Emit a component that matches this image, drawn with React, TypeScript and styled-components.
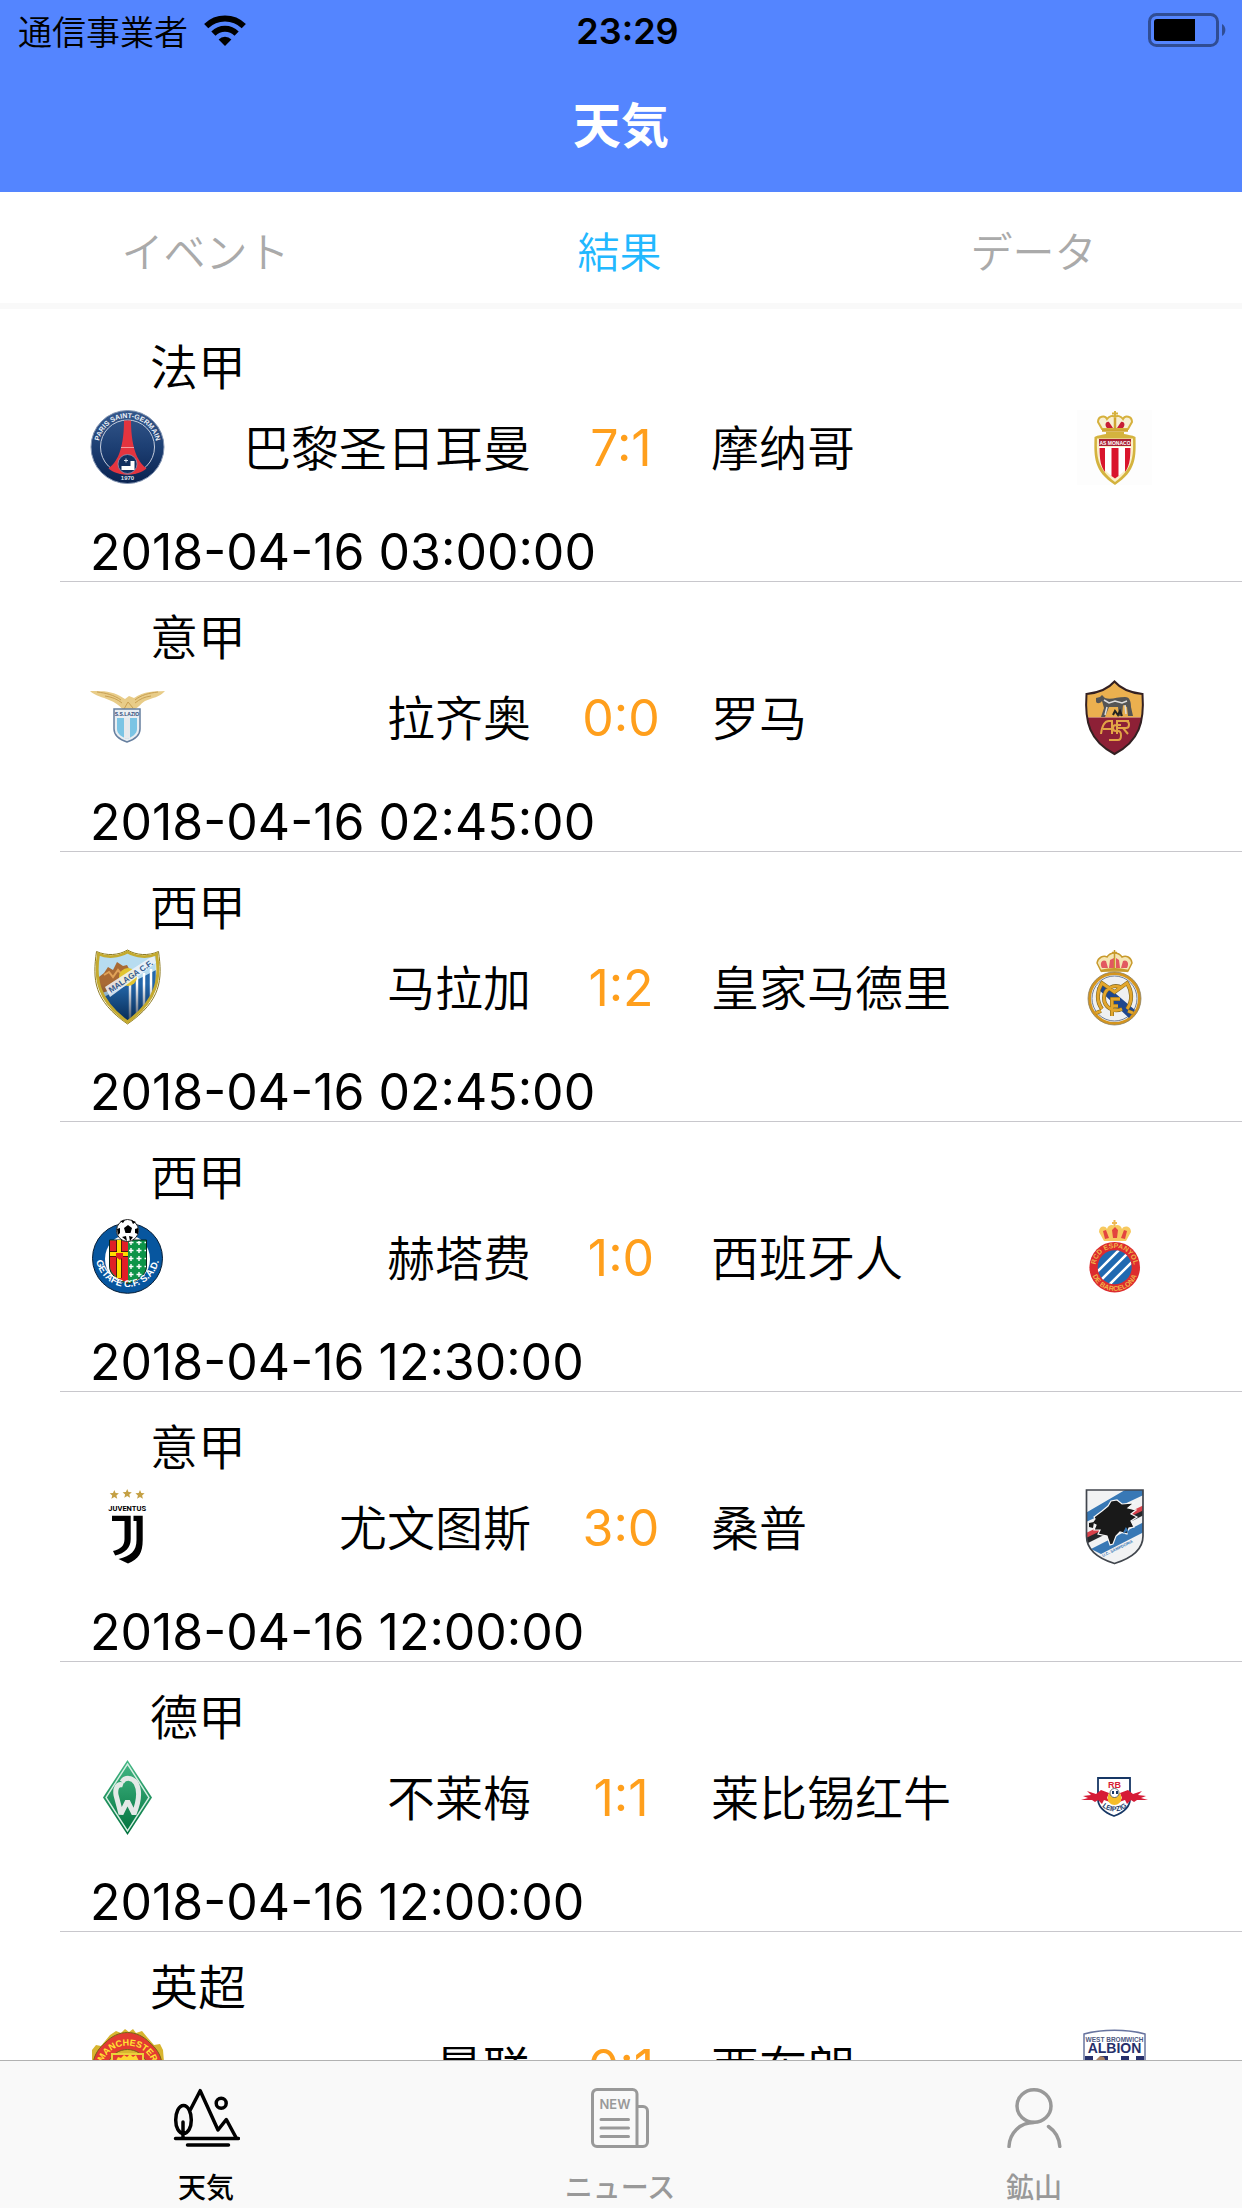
import React from "react";
import styled, { createGlobalStyle } from "styled-components";

const latin = `Inter, "Noto Sans CJK JP"`;

const GlobalStyle = createGlobalStyle`
  *, *::before, *::after { box-sizing: border-box; }
  body {
    margin: 0;
    background: #fff;
    color: #000;
    font-family: ${latin}, sans-serif;
  }
  button { border: 0; padding: 0; background: none; font: inherit; cursor: pointer; }
`;

const Screen = styled.div`
  display: flex;
  flex-direction: column;
  height: 100vh;
`;

const Header = styled.header`
  flex: none;
  background: #5485ff;
`;

const StatusBar = styled.div`
  display: grid;
  grid-template-columns: 1fr auto 1fr;
  align-items: center;
  height: 60px;
  padding: 0 15px 0 18px;
`;

const Carrier = styled.div`
  display: flex;
  align-items: center;
  gap: 16px;
  font-size: 34px;
  font-weight: 350;
`;

const Clock = styled.time`
  padding: 2px 0 0 10px;
  font-size: 36px;
  font-weight: 600;
`;

const BatterySlot = styled.div`
  display: flex;
  justify-content: flex-end;
`;

const Title = styled.h1`
  margin: 0;
  font-size: 48px;
  font-weight: 700;
  line-height: 132px;
  text-align: center;
  color: #fff;
`;

const Segments = styled.nav`
  flex: none;
  display: grid;
  grid-template-columns: repeat(3, 1fr);
  border-bottom: 6px solid #f9f9f9;
`;

const Segment = styled.button<{ $active?: boolean }>`
  && { padding: 4px 3px 0 0; }
  height: 111px;
  font-size: 42px;
  font-weight: 350;
  color: ${(p) => (p.$active ? "#22b8ff" : "#aaa")};
`;

const MatchList = styled.ul`
  flex: 1;
  min-height: 0;
  margin: 0;
  padding: 3px 0 0;
  overflow-y: auto;
  scrollbar-width: none;
  list-style: none;
`;

const MatchRow = styled.li`
  height: 270px;
  margin-left: 60px;
  padding: 22px 90px 0 30px;
  border-bottom: 1px solid #c8c7cc;
`;

const League = styled.div`
  padding-left: 60px;
  font-family: "Noto Sans CJK SC", sans-serif;
  font-size: 48px;
  font-weight: 350;
  line-height: 60px;
`;

const Fixture = styled.div`
  display: grid;
  grid-template-columns: 75px 1fr 180px 1fr 75px;
  align-items: center;
  margin: 16px 0 37px;
`;

const Team = styled.span<{ $side: "left" | "right" }>`
  padding-bottom: 5px;
  font-family: "Noto Sans CJK SC", sans-serif;
  font-size: 48px;
  font-weight: 350;
  line-height: 60px;
  white-space: nowrap;
  text-align: ${(p) => p.$side};
`;

const Score = styled.strong`
  font-size: 50px;
  font-weight: 400;
  line-height: 60px;
  text-align: center;
  color: #ff9f1c;
`;

const Kickoff = styled.time`
  display: block;
  font-size: 50px;
  line-height: 60px;
`;

const CrestSvg = styled.svg`
  display: block;
  width: 75px;
  height: 75px;
  overflow: visible;
  font-family: "Liberation Sans", sans-serif;
  font-weight: 700;
`;

const TabBar = styled.nav`
  flex: none;
  display: grid;
  grid-template-columns: repeat(3, 1fr);
  border-top: 1px solid #b2b2b2;
  background: #f9f9f9;
`;

const Tab = styled.button<{ $active?: boolean }>`
  && { padding: 27px 2px 2px 0; }
  display: flex;
  flex-direction: column;
  align-items: center;
  gap: 22px;
  font-size: 28px;
  font-weight: 500;
  line-height: 36px;
  color: ${(p) => (p.$active ? "#000" : "#999")};
`;

const Wifi = () => (
  <svg width="42" height="31" viewBox="0 0 42 31" aria-hidden="true">
    <g fill="none" stroke="#000" strokeWidth="6">
      <path d="M2.2 11.2a27 27 0 0 1 37.6 0" />
      <path d="M9.4 18.6a16.6 16.6 0 0 1 23.2 0" />
    </g>
    <path d="M21 31l-6.4-6.6a9 9 0 0 1 12.8 0z" />
  </svg>
);

const Battery = () => (
  <svg width="79" height="34" viewBox="0 0 79 34" aria-hidden="true">
    <rect x="1.5" y="1.5" width="68" height="31" rx="7" fill="none" stroke="#000" strokeOpacity=".42" strokeWidth="3" />
    <path d="M6 9a3 3 0 0 1 3-3h38v22H9a3 3 0 0 1-3-3z" />
    <path d="M74 11a7 7 0 0 1 0 12z" fillOpacity=".42" />
  </svg>
);

const WeatherIcon = () => (
  <svg width="67" height="60" viewBox="0 0 67 60" fill="none" stroke="currentColor" strokeWidth="3.5" strokeLinecap="round" strokeLinejoin="round" aria-hidden="true">
    <path d="M17.5 21.5L27.2 2.7 45 42l8.3-10.5L63 49.5" />
    <circle cx="48.2" cy="15.3" r="5" />
    <path d="M10.5 17.5c-5 0-7.8 7.5-7.8 14.5s3 13.5 7.8 13.5 7.8-6.5 7.8-13.5-2.8-14.5-7.8-14.5zM10 34v16M2.5 50.5h63M14.5 57h41" />
  </svg>
);

const NewsIcon = () => (
  <svg width="59" height="60" viewBox="0 0 59 60" fill="none" stroke="currentColor" strokeWidth="3" strokeLinecap="round" strokeLinejoin="round" aria-hidden="true">
    <path d="M46 58.5H6A4.500 4.500 0 0 1 1.500 54V6A4.500 4.500 0 0 1 6 1.500h35.500A4.500 4.500 0 0 1 46 6v52.500h6a4.500 4.500 0 0 0 4.500-4.500V23a4.500 4.500 0 0 0-4.500-4.500h-6" />
    <path d="M10 31.500h27.500M10 40h27.500M10 48.500h27.500" />
    <text x="24" y="20.500" textAnchor="middle" fill="currentColor" stroke="none" fontSize="13" fontWeight="600">NEW</text>
  </svg>
);

const PersonIcon = () => (
  <svg width="55" height="60" viewBox="0 0 55 60" fill="none" stroke="currentColor" strokeWidth="3.5" strokeLinecap="round" aria-hidden="true">
    <ellipse cx="27" cy="18" rx="17" ry="16.200" />
    <path d="M27 34.500C13 34.500 2.500 45 2 58.500M41.500 38.500c6.500 4.500 10.800 11.500 11.300 20" />
  </svg>
);

const Psg = () => (
  <>
    <defs>
      <linearGradient id="psg-bg" x2="0" y2="1"><stop stopColor="#35588c" /><stop offset=".5" stopColor="#1d3f73" /><stop offset="1" stopColor="#0a2350" /></linearGradient>
      <path id="psg-arc" d="M8.500 37a29 29 0 0 1 58 0" />
    </defs>
    <circle cx="37.500" cy="37" r="36.500" fill="url(#psg-bg)" stroke="#8596b3" strokeWidth="1" />
    <circle cx="37.500" cy="37" r="27" fill="none" stroke="#c4cddd" strokeWidth="1" />
    <path d="M34 10.500h7c0 15 2 27 6 36 3 6 6 9 9.500 12-5 4-11 6-19 6s-14-2-19-6c3.500-3 6.500-6 9.500-12 4-9 6-21 6-36z" fill="#e3343f" />
    <path d="M31 37.500h13" stroke="#f39a9d" />
    <circle cx="37.500" cy="54" r="9.500" fill="#12305f" stroke="#8ea1c2" strokeWidth=".7" />
    <path d="M42.500 51v7H31.500" fill="none" stroke="#fff" strokeWidth="4" />
    <path d="M34 50.500h4M36 48.500v4" stroke="#d7dfea" strokeWidth="1" />
    <text fontSize="7" fill="#eef2f8" textAnchor="middle"><textPath href="#psg-arc" startOffset="50%">PARIS SAINT-GERMAIN</textPath></text>
    <text x="37.500" y="70" fontSize="6" fill="#dfe6f0" textAnchor="middle">1970</text>
  </>
);

const Monaco = () => (
  <>
    <rect width="75" height="75" fill="#fdfdfd" />
    <path d="M38 1v6M35 3.500h6" stroke="#d6b13d" strokeWidth="2" />
    <path d="M25 19l-4-7c0-6 7-7 9-3 2-3 6-4 8-2 2-2 6-1 8 2 2-4 9-3 9 3l-4 7z" fill="#f7eed2" stroke="#d6b13d" strokeWidth="2" />
    <path d="M30 18c-3-3-1-7 2-6l4 6zM46 18c3-3 1-7-2-6l-4 6z" fill="#c71d34" />
    <path d="M38 8v11M25 20.500h26" stroke="#cfa431" strokeWidth="2.500" />
    <path d="M29 22h18v2c4 1 8 1 11.500 3 .5 20 1 34-20.500 48C16.500 61 17 47 17.500 27c3.500-2 7.500-2 11.500-3z" fill="#d4b33e" />
    <path d="M20 28.500h36c.5 18 0 30-18 43.500C20 58.500 19.500 46.500 20 28.500z" fill="#fbf0c8" />
    <path d="M22 29h32v7H22z" fill="#a92135" />
    <path d="M22 37h32c0 14-1 22-16 31C23 59 22 51 22 37z" fill="#fff" />
    <path d="M22.500 38H28v24c-4-5-5.500-12-5.500-24zM34.500 38h7v28L38 68.500 34.500 66zM48 38h5.500c0 12-1.500 19-5.500 24z" fill="#d9152c" />
    <text x="38" y="34.500" fontSize="5" fill="#fff" textAnchor="middle">AS MONACO</text>
  </>
);

const Lazio = () => (
  <>
    <path d="M0 11c9 0 21-.5 30 5l5 3 4-3 5 2C54 11 65 11.500 75 11c-5 6-13 7-20 10-5 3-7 8-13 9H33c-4-5-8-8-14-10C13 17 5 16 0 11z" fill="#e8cc88" />
    <path d="M7 12c9 1 17 3 24 8M15 16c7 1 12 3 17 7M68 12c-9 1-17 3-23 8M61 16c-7 1-11 3-16 7M34 29l4-7 5 6" fill="none" stroke="#c9a052" strokeWidth="1" />
    <path d="M24 29h26v20c0 8-7 11-13 13-6-2-13-5-13-13z" fill="#e9eef2" stroke="#667f9f" strokeWidth="1.500" />
    <path d="M27 38h20v11c0 5-5 8-10 10-5-2-10-5-10-10z" fill="#7bc4e4" />
    <path d="M34 38h6v20l-3 1-3-1z" fill="#e7e9ec" />
    <text x="37" y="35.500" fontSize="5" fill="#2d4a79" textAnchor="middle">S.S.LAZIO</text>
  </>
);

const Malaga = () => (
  <>
    <defs>
      <clipPath id="malaga-clip"><path d="M8.500 4.500c9 4 20 3 29-2 9 5 20 6 29 2 4 24 1 45-29 67C7.500 49.500 4.500 28.500 8.500 4.500z" /></clipPath>
      <linearGradient id="malaga-shade" x2="0" y2="1"><stop offset=".45" stopColor="#001a3d" stopOpacity="0" /><stop offset="1" stopColor="#001a3d" stopOpacity=".85" /></linearGradient>
    </defs>
    <g clipPath="url(#malaga-clip)">
      <path d="M0 0h75v75H0z" fill="#b7dcf0" />
      <path d="M5 30l9-7 4-6 5 3 4-8 6 4 4-1 5 9v9L12 43z" fill="#a96a34" />
      <path d="M14 25l5-3 4 5 5-7 5 6" stroke="#e0a258" strokeWidth="2" fill="none" />
      <path d="M10 49L72 17v60H5z" fill="#2467aa" />
      <path d="M40 31v45M47 27v45M54 23v45M61 19v40M67 14v40" stroke="#fff" strokeWidth="2.500" />
      <path d="M0 0h75v75H0z" fill="url(#malaga-shade)" />
    </g>
    <circle cx="38" cy="27" r="9" fill="#e1c530" />
    <path d="M15 37L64 5l2 8-46 34z" fill="#eef3fa" fillOpacity=".85" />
    <text transform="translate(21 43) rotate(-34)" fontSize="8" fill="#31578b">MALAGA C.F.</text>
    <path d="M6.500 1.500c10 4.500 22 4 31-1.500 9 5.500 21 6 31 1.500 4 28 3 49-31 72.500C3.500 50.500 2.500 29.500 6.500 1.500z" fill="none" stroke="#8d7a22" strokeWidth="1" />
    <path d="M8.500 4c9 4 20 3 29-2 9 5 20 6 29 2 4 24 1 46-29 68C7.500 50 4.500 28 8.500 4z" fill="none" stroke="#c4aa2f" strokeWidth="3" />
  </>
);

const Roma = () => (
  <>
    <defs><clipPath id="roma-clip"><path d="M9.500 14C20 13 31 9 37.500 1.500 44 9 55 13 65.500 14c2 28-3 47-28 60C12.500 61 7.500 42 9.500 14z" /></clipPath></defs>
    <g clipPath="url(#roma-clip)">
      <path d="M0 0h75v37.500H0z" fill="#ebb04f" />
      <path d="M0 37.500h75V75H0z" fill="#8d2036" />
    </g>
    <path d="M9.500 14C20 13 31 9 37.500 1.500 44 9 55 13 65.500 14c2 28-3 47-28 60C12.500 61 7.500 42 9.500 14z" fill="none" stroke="#332022" strokeWidth="2" />
    <path d="M19 18l4-1 2-2 3 3c6 2 12-1 20-1 5 0 6 5 6 10l2 9h-5l-1-9-4-2-1 11h-3l-1-9h-9l-4 10h-4l3-9-2-7c-2 3-6 3-6 0z" fill="#555" />
    <path d="M27 20l5 3 6-2 7 2 5-2M30 27l-2 8M48 25l1 9" stroke="#ddd" strokeWidth="1.500" fill="none" />
    <path d="M36 35l2-4 3 4 2-4 2 5" stroke="#222" strokeWidth="2" fill="none" />
    <g fill="none" stroke="#e2a546" strokeWidth="2">
      <path d="M24 54c1-8 4-13 8-13h3v13M26 49h9M52 41H40v13M40 48h9c4 0 4-7 0-7M46 48l5 6M44 45h-5c-4 0-4 6 0 6h2c4 0 4 9 0 9h-9" />
    </g>
  </>
);

const RealMadrid = () => (
  <>
    <path d="M24 21l-4-8c1-6 7-8 10-6 2-3 5-4 7.500-4S43 4 45 7c4-2 9 0 10 6l-4 8z" fill="#f5e6b4" stroke="#c89a2c" strokeWidth="1.500" />
    <path d="M25 18c-3-6 1-9 4-7l2 7zM32 18l1-8 4-2v10zM43 18l-1-8-3-2v10zM50 18c3-6-1-9-4-7l-2 7z" fill="#e25861" />
    <path d="M37.500 0v6M35 2.500h5M37.500 6v14" stroke="#c89a2c" strokeWidth="1.500" />
    <path d="M24 21c8-2 19-2 27 0" stroke="#c89a2c" strokeWidth="2.500" fill="none" />
    <circle cx="37.500" cy="48.500" r="25" fill="#eff0f2" stroke="#d4951f" strokeWidth="3" />
    <circle cx="37.500" cy="48.500" r="26.500" fill="none" stroke="#8d8264" strokeWidth=".8" />
    <circle cx="37.500" cy="48.500" r="22.500" fill="none" stroke="#70819c" strokeWidth="1" />
    <path d="M20 38l6-5 32 27-6 8z" fill="#1f478e" />
    <g fill="none" stroke="#7e6520" strokeWidth="4"><path d="M19 63l5-2M51 61l5 2M25 59c-6-8-5-18 0-26l12.500 9L50 33c5 8 6 18 0 26M45 38c-8-5-18 1-18 10s9 15 18 11M35 66V49h8M35 56h6" /></g>
    <g fill="none" stroke="#e3a62c" strokeWidth="2.800"><path d="M19 63l5-2M51 61l5 2M25 59c-6-8-5-18 0-26l12.500 9L50 33c5 8 6 18 0 26M45 38c-8-5-18 1-18 10s9 15 18 11M35 66V49h8M35 56h6" /></g>
  </>
);

const Getafe = () => (
  <>
    <defs>
      <path id="getafe-arc" d="M5.500 34a32 33 0 0 0 64 0" />
      <pattern id="getafe-cross" width="8" height="8" patternUnits="userSpaceOnUse" x="38" y="20"><path d="M3 0v5M.5 2.500h5" stroke="#fff" strokeWidth="1.400" /></pattern>
    </defs>
    <circle cx="37.500" cy="38.300" r="35" fill="#07569f" stroke="#061d35" strokeWidth="1" />
    <ellipse cx="37.500" cy="39" rx="22.500" ry="24" fill="#fff" />
    <path d="M19.500 20h37v26c0 9-8 14-18.500 18-10.500-4-18.500-9-18.500-18z" fill="#0d9448" stroke="#052418" />
    <path d="M20 20.500h18V63c-10-4-18-9-18-17z" fill="#e01e26" />
    <path d="M29 20v38M20 34h18" stroke="#201506" strokeWidth="5.500" />
    <path d="M29 20v38M20 34h18" stroke="#ffdc00" strokeWidth="4" />
    <path d="M26 33h7v4l-3 3-4-3z" fill="#e01e26" />
    <path d="M39 21h17v25c0 8-8 13-17 16z" fill="url(#getafe-cross)" />
    <circle cx="37.500" cy="10.500" r="11" fill="#fff" stroke="#222" strokeWidth="1" />
    <path d="M34 8l4-3 4 3-1.500 5h-5zM30 1l5-1-2 3zM41 0l5 2-3 2zM27 9l3-1v5l-2 2zM48 8l-3 1v4l3 1zM32 17l4-1 1 5zM43 17l-4-1 1 5z" />
    <text fontSize="9.500" fill="#fff" textAnchor="middle"><textPath href="#getafe-arc" startOffset="50%">GETAFE C.F. S.A.D.</textPath></text>
  </>
);

const star = "l1.3 3 3.3.3-2.500 2.200.8 3.300-2.900-1.700-2.900 1.700.8-3.300-2.500-2.200 3.300-.3z";

const Juventus = () => (
  <>
    <path d={`M24.300 0${star}M37.200-1${star}M50 0${star}`} fill="#c4a044" />
    <text x="37.200" y="20.500" fontSize="7.500" fontFamily="Roboto, sans-serif" textAnchor="middle">JUVENTUS</text>
    <path d="M22 25.700h18.700V49c0 9-5.700 14-15.500 16.500L23 61c8-2 11.500-5.500 11.500-12V31H22zM43.500 25.700h9.200V50c0 13-4 19-14.700 23.500l-9.500-4.500C41 66 46.500 61 46.500 50V31h-3z" />
  </>
);

const Espanyol = () => (
  <>
    <defs>
      <clipPath id="esp-clip"><circle cx="37.700" cy="47.200" r="17" /></clipPath>
      <path id="esp-top" d="M18.500 47.200a19.200 19.200 0 0 1 38.400 0" />
      <path id="esp-bottom" d="M14 47.200a23.700 23.700 0 0 0 47.400 0" />
    </defs>
    <path d="M27 21l-5-9c0-6 6-7 8-3 1-4 5-5 7.500-3C40 4 44 5 45 9c2-4 9-3 9 3l-5 9z" fill="#f7c95f" />
    <path d="M28 19l-2-8 3-1 3 8zM36 18h4l1-8-3-3-3 3zM48 19l2-8-3-1-3 8z" fill="#e3453f" />
    <path d="M37.500 0v6M35 3h5" stroke="#eeb954" strokeWidth="2" />
    <circle cx="37.700" cy="47.200" r="25.300" fill="#dd2b2f" />
    <g clipPath="url(#esp-clip)">
      <path d="M15 25h45v45H15z" fill="#2169b1" />
      <path d="M18 54l28-28M24 60l32-32M32 65l28-28" stroke="#fff" strokeWidth="2.500" />
    </g>
    <text fontSize="7" fill="#f0b648" textAnchor="middle"><textPath href="#esp-top" startOffset="50%">RCD ESPANYOL</textPath></text>
    <text fontSize="7" fill="#f0b648" textAnchor="middle"><textPath href="#esp-bottom" startOffset="50%">DE BARCELONA</textPath></text>
  </>
);

const Sampdoria = () => (
  <>
    <defs><clipPath id="samp-clip"><path d="M9.500 0h56.500v46c0 15-14 23-28.500 27.500C23 69 9.500 61 9.500 46z" /></clipPath></defs>
    <g clipPath="url(#samp-clip)">
      <path d="M0 0h75v75H0z" fill="#f1f2f3" />
      <path d="M5 25L48 0h23v3L5 34zM14 59l57-29v10L24 64z" fill="#3878b5" />
      <path d="M5 45l66-32v6L5 51z" fill="#d8404a" />
      <path d="M5 50l66-32v5L5 56z" fill="#26282c" />
    </g>
    <path d="M17 27l8-6 6-5 3-5 6-1 5 4 12-1-6 5 8 2-5 4 6 3-6 4 3 6-5 1-2 6-7-2-4 4-3 8-3 1-3-9-9-2 2-4h-6l2-5-4-2 3-4z" fill="#191919" stroke="#f7f7f7" strokeWidth="1.200" />
    <path d="M12 33l5-1-1 6-4-1z" fill="#191919" />
    <path d="M47 43l2-4 4 6" fill="none" stroke="#3878b5" strokeWidth="2" />
    <path d="M9.500 0h56.500v46c0 15-14 23-28.500 27.500C23 69 9.500 61 9.500 46z" fill="none" stroke="#41464d" strokeWidth="1.700" />
    <text transform="translate(26 67) rotate(-26)" fontSize="4" fill="#3878b5">U.C. SAMPDORIA</text>
  </>
);

const Werder = () => (
  <>
    <defs><linearGradient id="werder-bg" x2="0" y2="1"><stop stopColor="#45b886" /><stop offset="1" stopColor="#00713c" /></linearGradient></defs>
    <path d="M37.500 0l24.500 37.500L37.500 75 13 37.500z" fill="url(#werder-bg)" />
    <path d="M37.500 4l21.500 33.500L37.500 71 16 37.500z" fill="none" stroke="#d6efe3" strokeWidth="1.400" />
    <path d="M33 25c-6-2-8 4-7 10l5 19 6.500-13 6.500 13c4-10 7-22 2-31-4-6-11-6-14-1" fill="none" stroke="#e4e9e7" strokeWidth="5" strokeLinejoin="bevel" />
  </>
);

const Leipzig = () => (
  <>
    <path d="M21 18h32v21c0 9-8 14-16 17-8-3-16-8-16-17z" fill="#fff" stroke="#173765" strokeWidth="1.800" />
    <path d="M4 40l7-2-5-2 8-1-4-4 9 3 5-4 8 3-2 5 3 4-6-2-2 4-4-4-3 2-3-2zM71 40l-7-2 5-2-8-1 4-4-9 3-5-4-8 3 2 5-3 4 6-2 2 4 4-4 3 2 3-2z" fill="#d61b36" />
    <circle cx="37.500" cy="38" r="7" fill="#f6bd28" />
    <circle cx="37.500" cy="33" r="4.500" fill="#fff" stroke="#24364d" strokeWidth=".7" />
    <path d="M35 31h2v3h-2zM39 31h2v3h-2z" fill="#173765" />
    <text x="37.500" y="27.500" fontSize="9" fill="#d61b36" textAnchor="middle">RB</text>
    <path id="rb-arc" d="M23 43a15 11 0 0 0 29 0" fill="none" />
    <text fontSize="7" fill="#173765" textAnchor="middle"><textPath href="#rb-arc" startOffset="50%">LEIPZIG</textPath></text>
  </>
);

const ManUnited = () => (
  <>
    <path id="mu-arc" d="M12 35C18 9 57 9 63 35" fill="none" />
    <path d="M2 20l4-5 5 1 9-11 6-4 5 2 4-4 4 3 4-3 3 4 6-2 5 6 7 8 6-1 3 6 1 12-72 1z" fill="#d8b52f" />
    <path d="M3 34c1-10 7-17 12-21C28-1 47-1 60 13c5 4 11 11 12 21l-7 10-8-11c-7-18-32-18-39 0l-8 11z" fill="#e33b31" stroke="#776318" strokeWidth="1" />
    <path d="M22 24h31v20H22z" fill="#e33b31" stroke="#ead03c" strokeWidth="2" />
    <path d="M26 31h23l-3-6-3 2-3-3-3 3-3-2-3 3-3-1z" fill="#ffd531" />
    <text fontSize="9" fill="#ffe331" textAnchor="middle"><textPath href="#mu-arc" startOffset="50%">MANCHESTER</textPath></text>
  </>
);

const WestBrom = () => (
  <>
    <path d="M7 4c18-5 43-5 61 0v35c-1 19-18 28-30.500 35C25 67 8 58 7 39z" fill="#fff" stroke="#68749f" strokeWidth="1.500" />
    <path d="M8 26h8v26l-5-6-3-9zM23 26h8v40l-8-6zM44 26h8v35l-8 5zM59 26h8v12l-3 9-5 5z" fill="#27306b" />
    <path d="M19 30l4-4 4 1 3 7H18z" fill="#a98061" />
    <text x="37.500" y="11.500" fontSize="6.500" fill="#4d587f" textAnchor="middle">WEST BROMWICH</text>
    <text x="37.500" y="23" fontSize="14" fill="#27306b" textAnchor="middle">ALBION</text>
  </>
);

type Side = { name: string; crest: React.ComponentType };
type Match = { league: string; home: Side; away: Side; score: string; kickoff?: string };

const matches: Match[] = [
  { league: "法甲", home: { name: "巴黎圣日耳曼", crest: Psg }, score: "7:1", away: { name: "摩纳哥", crest: Monaco }, kickoff: "2018-04-16 03:00:00" },
  { league: "意甲", home: { name: "拉齐奥", crest: Lazio }, score: "0:0", away: { name: "罗马", crest: Roma }, kickoff: "2018-04-16 02:45:00" },
  { league: "西甲", home: { name: "马拉加", crest: Malaga }, score: "1:2", away: { name: "皇家马德里", crest: RealMadrid }, kickoff: "2018-04-16 02:45:00" },
  { league: "西甲", home: { name: "赫塔费", crest: Getafe }, score: "1:0", away: { name: "西班牙人", crest: Espanyol }, kickoff: "2018-04-16 12:30:00" },
  { league: "意甲", home: { name: "尤文图斯", crest: Juventus }, score: "3:0", away: { name: "桑普", crest: Sampdoria }, kickoff: "2018-04-16 12:00:00" },
  { league: "德甲", home: { name: "不莱梅", crest: Werder }, score: "1:1", away: { name: "莱比锡红牛", crest: Leipzig }, kickoff: "2018-04-16 12:00:00" },
  { league: "英超", home: { name: "曼联", crest: ManUnited }, score: "0:1", away: { name: "西布朗", crest: WestBrom } },
];

const Crest = ({ side }: { side: Side }) => {
  const Drawing = side.crest;
  return (
    <CrestSvg viewBox="0 0 75 75" aria-hidden="true">
      <Drawing />
    </CrestSvg>
  );
};

export default function App() {
  return (
    <Screen>
      <GlobalStyle />
      <Header>
        <StatusBar>
          <Carrier>通信事業者<Wifi /></Carrier>
          <Clock>23:29</Clock>
          <BatterySlot><Battery /></BatterySlot>
        </StatusBar>
        <Title>天気</Title>
      </Header>
      <Segments>
        <Segment type="button">イベント</Segment>
        <Segment type="button" $active>結果</Segment>
        <Segment type="button">データ</Segment>
      </Segments>
      <MatchList>
        {matches.map((m) => (
          <MatchRow key={m.home.name}>
            <League>{m.league}</League>
            <Fixture>
              <Crest side={m.home} />
              <Team $side="right">{m.home.name}</Team>
              <Score>{m.score}</Score>
              <Team $side="left">{m.away.name}</Team>
              <Crest side={m.away} />
            </Fixture>
            {m.kickoff && <Kickoff>{m.kickoff}</Kickoff>}
          </MatchRow>
        ))}
      </MatchList>
      <TabBar>
        <Tab type="button" $active><WeatherIcon />天気</Tab>
        <Tab type="button"><NewsIcon />ニュース</Tab>
        <Tab type="button"><PersonIcon />鉱山</Tab>
      </TabBar>
    </Screen>
  );
}
